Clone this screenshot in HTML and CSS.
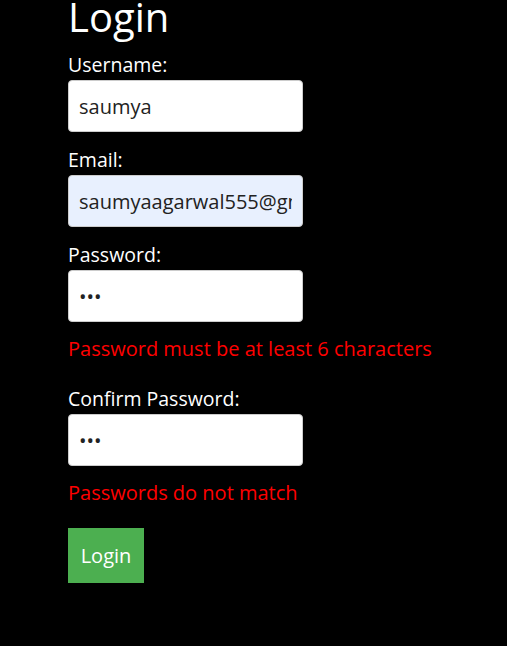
FILE: index.html
```html
<!DOCTYPE html>
<html>
<head>
<meta charset="utf-8">
<link rel="stylesheet" href="styles.css">
</head>
<body>
<div class="page">
  <h1 class="title">Login</h1>
  <form class="form">
    <div class="field">
      <label class="label">Username:</label>
      <input class="input" type="text" value="saumya">
    </div>
    <div class="field">
      <label class="label">Email:</label>
      <input class="input autofill" type="text" value="saumyaagarwal555@gmail.com">
    </div>
    <div class="field">
      <label class="label">Password:</label>
      <input class="input" type="password" value="abc">
      <p class="error">Password must be at least 6 characters</p>
    </div>
    <div class="field field-last">
      <label class="label">Confirm Password:</label>
      <input class="input" type="password" value="abd">
      <p class="error">Passwords do not match</p>
    </div>
    <button class="btn" type="button">Login</button>
  </form>
</div>
</body>
</html>
```

FILE: styles.css
```css
html, body {
  margin: 0;
  padding: 0;
  background: #000;
}
body {
  font-family: "Open Sans", "Noto Sans", sans-serif;
  color: #fff;
  height: 646px;
  overflow: hidden;
}
.page {
  padding-left: 68px;
}
.title {
  font-size: 40px;
  font-weight: 400;
  line-height: 34px;
  margin: 0 0 19px 0;
}
.form {
  display: flex;
  flex-direction: column;
  align-items: flex-start;
}
.field {
  display: flex;
  flex-direction: column;
  align-items: flex-start;
  margin-bottom: 16px;
}
.field-last {
  margin-bottom: 13px;
}
.label {
  font-size: 19.5px;
  line-height: 24px;
  margin-bottom: 3px;
}
.input {
  box-sizing: border-box;
  width: 235px;
  height: 52px;
  border: 1px solid #ccc;
  border-radius: 4px;
  background: #fff;
  padding: 0 10px;
  font-family: inherit;
  font-size: 20px;
  color: #222;
  outline: none;
}
.autofill {
  background: #e8f0fe;
}
.error {
  color: #f00;
  font-size: 20px;
  line-height: 24px;
  margin: 15px 0 10px 0;
  white-space: nowrap;
}
.btn {
  width: 76px;
  height: 55px;
  background: #4caf50;
  color: #fff;
  border: none;
  font-family: inherit;
  font-size: 20px;
  padding: 0;
}
```
